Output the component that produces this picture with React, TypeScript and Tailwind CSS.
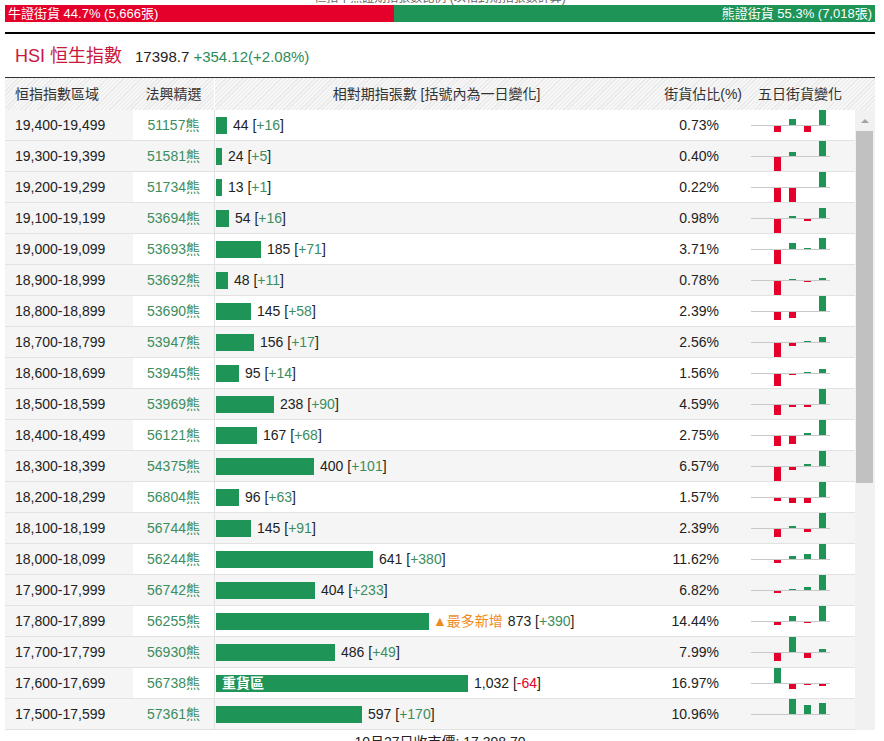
import React from 'react';

type Row = {
  range: string;
  code: string;
  qty: number;
  chg: number;
  pct: string;
  spark: number[];
  tag?: 'new' | 'heavy';
};

const rows: Row[] = [
  { range: '19,400-19,499', code: '51157', qty: 44, chg: 16, pct: '0.73', spark: [0, -6, 6, -6, 15] },
  { range: '19,300-19,399', code: '51581', qty: 24, chg: 5, pct: '0.40', spark: [0, -15, 4, 0, 15] },
  { range: '19,200-19,299', code: '51734', qty: 13, chg: 1, pct: '0.22', spark: [0, -15, -15, 0, 15] },
  { range: '19,100-19,199', code: '53694', qty: 54, chg: 16, pct: '0.98', spark: [0, -15, 2, -2, 10] },
  { range: '19,000-19,099', code: '53693', qty: 185, chg: 71, pct: '3.71', spark: [0, -15, 6, 1, 11] },
  { range: '18,900-18,999', code: '53692', qty: 48, chg: 11, pct: '0.78', spark: [0, -15, 1, -1, 2] },
  { range: '18,800-18,899', code: '53690', qty: 145, chg: 58, pct: '2.39', spark: [0, -8, -6, 0, 15] },
  { range: '18,700-18,799', code: '53947', qty: 156, chg: 17, pct: '2.56', spark: [0, -15, -3, 1, 5] },
  { range: '18,600-18,699', code: '53945', qty: 95, chg: 14, pct: '1.56', spark: [0, -12, -1, 1, 4] },
  { range: '18,500-18,599', code: '53969', qty: 238, chg: 90, pct: '4.59', spark: [0, -10, -2, -2, 15] },
  { range: '18,400-18,499', code: '56121', qty: 167, chg: 68, pct: '2.75', spark: [0, -10, -8, 2, 15] },
  { range: '18,300-18,399', code: '54375', qty: 400, chg: 101, pct: '6.57', spark: [0, -15, -3, 2, 15] },
  { range: '18,200-18,299', code: '56804', qty: 96, chg: 63, pct: '1.57', spark: [0, -3, -5, -5, 15] },
  { range: '18,100-18,199', code: '56744', qty: 145, chg: 91, pct: '2.39', spark: [0, -8, 2, -3, 15] },
  { range: '18,000-18,099', code: '56244', qty: 641, chg: 380, pct: '11.62', spark: [0, -3, 3, 5, 15] },
  { range: '17,900-17,999', code: '56742', qty: 404, chg: 233, pct: '6.82', spark: [0, -2, 1, 3, 15] },
  { range: '17,800-17,899', code: '56255', qty: 873, chg: 390, pct: '14.44', spark: [0, -3, 5, -1, 15], tag: 'new' },
  { range: '17,700-17,799', code: '56930', qty: 486, chg: 49, pct: '7.99', spark: [0, -8, 15, -5, 3] },
  { range: '17,600-17,699', code: '56738', qty: 1032, chg: -64, pct: '16.97', spark: [0, 15, -5, -1, -2], tag: 'heavy' },
  { range: '17,500-17,599', code: '57361', qty: 597, chg: 170, pct: '10.96', spark: [0, 0, 15, 9, 11] },
];

const MAX_QTY = 1032;
const MAX_BAR = 252;

function Spark({ data }: { data: number[] }) {
  return (
    <svg width="110" height="30" viewBox="0 0 110 30">
      <line x1="6" y1="15.5" x2="85" y2="15.5" stroke="#c8c8c8" strokeWidth="1" />
      {data.map((v, k) => {
        if (v === 0) return null;
        const x = 14 + k * 15;
        return v > 0 ? (
          <rect key={k} x={x} y={15 - v} width="7" height={v} fill="#1e9457" />
        ) : (
          <rect key={k} x={x} y={16} width="7" height={-v} fill="#e4002b" />
        );
      })}
    </svg>
  );
}

function TableRow({ row, idx }: { row: Row; idx: number }) {
  const striped = idx % 2 === 1;
  const w = Math.max(3, Math.round((row.qty * MAX_BAR) / MAX_QTY));
  return (
    <div
      className={`flex h-[31px] border-b border-[#e2e2e2] text-[14px] text-[#222] ${
        striped ? 'bg-[#f5f5f5]' : 'bg-white'
      }`}
    >
      <div className="flex w-[128px] items-center bg-[#f5f5f5] pl-[10px]">{row.range}</div>
      <div className="flex w-[81px] items-center justify-center text-[#3b8d5e]">{row.code}熊</div>
      <div className="flex w-[444px] items-center border-l border-[#e2e2e2] pl-[1px]">
        <div
          className="flex h-[17px] items-center bg-[#1e9457] pl-[6px] font-bold text-white"
          style={{ width: w }}
        >
          {row.tag === 'heavy' ? '重貨區' : null}
        </div>
        {row.tag === 'new' && <span className="ml-[4px] text-[#f08a1e]">▲最多新增</span>}
        <span className={row.tag === 'new' ? 'ml-[5px]' : 'ml-[6px]'}>
          {row.qty.toLocaleString('en-US')} [
          <span className={row.chg < 0 ? 'text-[#e4002b]' : 'text-[#3b8d5e]'}>
            {row.chg < 0 ? row.chg : `+${row.chg}`}
          </span>
          ]
        </span>
      </div>
      <div className="flex w-[87px] items-center justify-end pr-[26px]">{row.pct}%</div>
      <div className="flex w-[110px] items-center">
        <Spark data={row.spark} />
      </div>
    </div>
  );
}

export default function App() {
  return (
    <div className="h-[741px] w-[884px] overflow-hidden bg-white font-['Liberation_Sans','Noto_Sans_CJK_TC',sans-serif]">
      <div className="mx-[5px] w-[870px]">
        <div className="-mt-[9px] h-[14px] text-center text-[12px] leading-[14px] text-[#666]">
          恒指牛熊證期指張數比例 (以相對期指張數計算)
        </div>

        <div className="flex h-[17px] text-[13px] leading-[17px] text-white">
          <div className="w-[44.7%] bg-[#e4002b] pl-[3px]">牛證街貨 44.7% (5,666張)</div>
          <div className="flex-1 bg-[#1e9457] pr-[3px] text-right">熊證街貨 55.3% (7,018張)</div>
        </div>

        <div className="mt-[10px] h-[2px] bg-black" />

        <div className="flex h-[43px] items-baseline gap-[13px] pl-[10px] pt-[9px]">
          <span className="text-[18px] text-[#c8193c]">HSI 恒生指數</span>
          <span className="text-[15px] text-[#222]">
            17398.7 <span className="text-[#2f8a58]">+354.12(+2.08%)</span>
          </span>
        </div>

        <div className="flex h-[33px] border-t border-[#333] bg-[repeating-linear-gradient(135deg,#e9e9e9_0px,#e9e9e9_1px,#f6f6f6_1px,#f6f6f6_3px)] text-[14px] text-[#333]">
          <div className="flex w-[128px] items-center pl-[10px]">恒指指數區域</div>
          <div className="flex w-[81px] items-center justify-center">法興精選</div>
          <div className="flex w-[444px] items-center justify-center border-l border-white">
            相對期指張數 [括號內為一日變化]
          </div>
          <div className="flex w-[87px] items-center justify-end pr-[3px]">街貨佔比(%)</div>
          <div className="flex w-[110px] items-center pl-[13px]">五日街貨變化</div>
        </div>

        <div className="flex">
          <div className="w-[850px]">
            {rows.map((r, i) => (
              <TableRow key={r.range} row={r} idx={i} />
            ))}
          </div>
          <div className="w-[20px] bg-[#f1f1f1]">
            <div className="flex h-[21px] items-center justify-center">
              <div className="h-0 w-0 border-x-[4px] border-b-[4px] border-x-transparent border-b-[#a3a3a3]" />
            </div>
            <div className="ml-[1px] h-[352px] w-[17px] bg-[#c1c1c1]" />
          </div>
        </div>

        <div className="pt-[2px] text-center text-[14px] text-[#222]">10月27日收市價: 17,398.70</div>
      </div>
    </div>
  );
}
